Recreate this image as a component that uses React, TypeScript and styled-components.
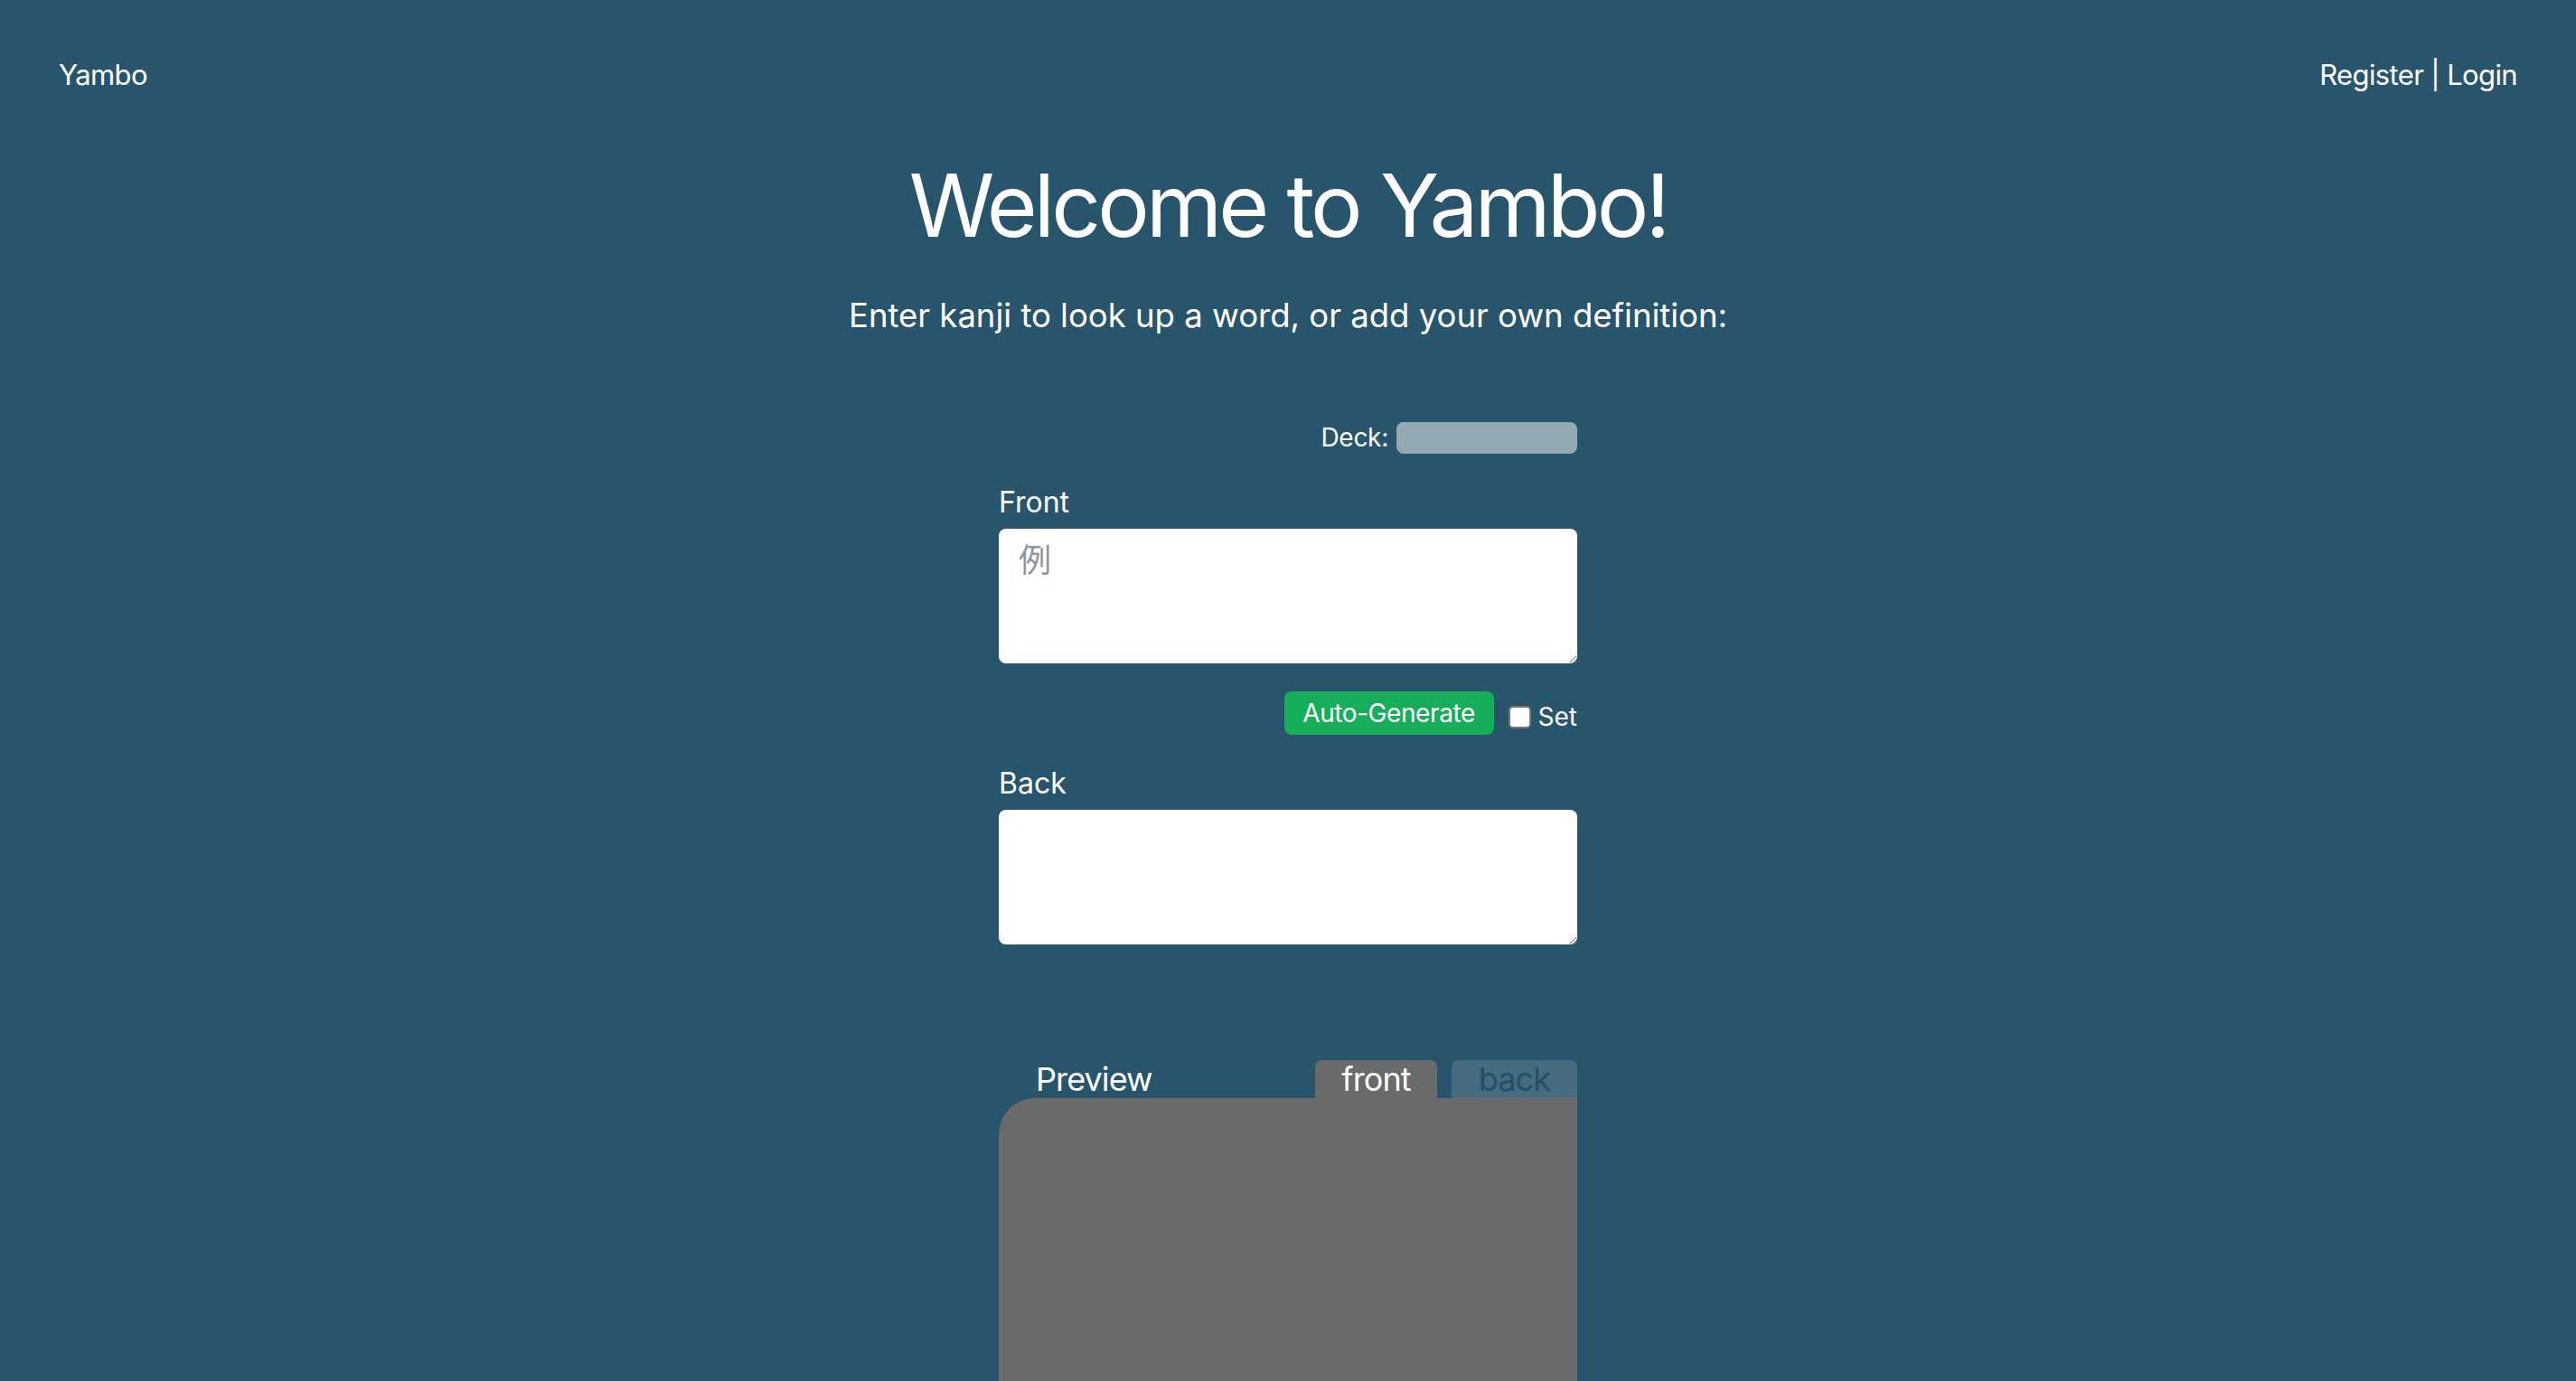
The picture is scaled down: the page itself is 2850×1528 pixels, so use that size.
import React, { useState } from 'react'
import styled, { createGlobalStyle } from 'styled-components'

const GlobalStyle = createGlobalStyle`
  html, body {
    margin: 0;
    padding: 0;
    background: #28556c;
  }
  body {
    font-family: Inter, "Noto Sans", "Noto Sans CJK JP", sans-serif;
    color: #ffffff;
  }
`

const Page = styled.div`
  min-height: 100vh;
  background: #28556c;
  display: flex;
  flex-direction: column;
`

const NavBar = styled.nav`
  display: flex;
  justify-content: space-between;
  align-items: center;
  padding: 63px 65px 0;
  font-size: 31px;
  line-height: 40px;
  letter-spacing: -0.02em;
`

const NavLink = styled.a`
  color: #ffffff;
  text-decoration: none;
  cursor: pointer;
`

const Hero = styled.header`
  display: flex;
  flex-direction: column;
  align-items: center;
`

const Title = styled.h1`
  margin: 69px 0 0;
  font-size: 96px;
  line-height: 110px;
  font-weight: 400;
  letter-spacing: -0.04em;
`

const Subtitle = styled.p`
  margin: 45px 0 0;
  font-size: 36.5px;
  line-height: 44px;
`

const Form = styled.section`
  width: 640px;
  margin: 96px auto 0;
  display: flex;
  flex-direction: column;
`

const DeckRow = styled.div`
  display: flex;
  justify-content: flex-end;
  align-items: center;
  gap: 9px;
  font-size: 28px;
  line-height: 35px;
  letter-spacing: -0.01em;
`

const DeckSelect = styled.div`
  width: 200px;
  height: 35px;
  border-radius: 8px;
  background: #95a9b3;
`

const FieldLabel = styled.label<{ $top: number }>`
  display: block;
  margin-top: ${p => p.$top}px;
  font-size: 32px;
  line-height: 40px;
`

const TextBox = styled.textarea`
  box-sizing: border-box;
  width: 640px;
  height: 149px;
  margin-top: 9px;
  padding: 10px 22px;
  border: none;
  border-radius: 8px;
  background: #ffffff;
  font-family: Inter, "Noto Sans CJK JP", sans-serif;
  font-size: 32px;
  line-height: 44px;
  color: #222;
  outline: none;
  resize: both;

  &::placeholder {
    color: #8d969c;
    font-family: "Noto Sans CJK JP", sans-serif;
    font-size: 36px;
  }
`

const ActionRow = styled.div`
  display: flex;
  justify-content: flex-end;
  align-items: center;
  margin-top: 31px;
  height: 48px;
`

const GenerateButton = styled.button`
  height: 48px;
  width: 232px;
  border: none;
  border-radius: 8px;
  background: #16ae5b;
  color: #ffffff;
  font-family: Inter, sans-serif;
  font-size: 28px;
  letter-spacing: -0.015em;
  cursor: pointer;
`

const CheckLabel = styled.label`
  display: flex;
  align-items: center;
  gap: 8px;
  margin-left: 16px;
  margin-top: 8px;
  font-size: 28px;
  line-height: 32px;
`

const CheckBox = styled.input`
  appearance: none;
  box-sizing: border-box;
  width: 25px;
  height: 25px;
  margin: 0;
  border: 2px solid #767676;
  border-radius: 5px;
  background: #ffffff;
  cursor: pointer;

  &:checked {
    background: #1a73e8;
    border-color: #1a73e8;
  }
`

const PreviewHead = styled.div`
  display: flex;
  align-items: flex-end;
  margin-top: 128px;
  height: 42px;
`

const PreviewTitle = styled.span`
  flex: 1;
  padding-left: 41px;
  font-size: 36px;
  line-height: 42px;
  letter-spacing: -0.025em;
`

const Tab = styled.button<{ $active: boolean }>`
  height: 42px;
  padding: 0 ${p => (p.$active ? 29 : 30)}px;
  margin-left: ${p => (p.$active ? 0 : 16)}px;
  border: none;
  border-radius: 7px 7px 0 0;
  background: ${p => (p.$active ? '#6a6a6a' : '#466a7e')};
  color: ${p => (p.$active ? '#ffffff' : '#22506a')};
  font-family: Inter, sans-serif;
  font-size: 36px;
  line-height: 42px;
  letter-spacing: -0.025em;
  cursor: pointer;
`

const PreviewCard = styled.div`
  height: 520px;
  background: #6a6a6a;
  border-top-left-radius: 40px;
`

export default function App() {
  const [side, setSide] = useState<'front' | 'back'>('front')
  const [front, setFront] = useState('')
  const [back, setBack] = useState('')
  const [setMode, setSetMode] = useState(false)

  return (
    <Page>
      <GlobalStyle />
      <NavBar>
        <NavLink>Yambo</NavLink>
        <NavLink>Register | Login</NavLink>
      </NavBar>
      <Hero>
        <Title>Welcome to Yambo!</Title>
        <Subtitle>Enter kanji to look up a word, or add your own definition:</Subtitle>
      </Hero>
      <Form>
        <DeckRow>
          <span>Deck:</span>
          <DeckSelect />
        </DeckRow>
        <FieldLabel $top={34}>Front</FieldLabel>
        <TextBox placeholder="例" value={front} onChange={e => setFront(e.target.value)} />
        <ActionRow>
          <GenerateButton>Auto-Generate</GenerateButton>
          <CheckLabel>
            <CheckBox
              type="checkbox"
              checked={setMode}
              onChange={e => setSetMode(e.target.checked)}
            />
            Set
          </CheckLabel>
        </ActionRow>
        <FieldLabel $top={34}>Back</FieldLabel>
        <TextBox value={back} onChange={e => setBack(e.target.value)} />
        <PreviewHead>
          <PreviewTitle>Preview</PreviewTitle>
          <Tab $active={side === 'front'} onClick={() => setSide('front')}>
            front
          </Tab>
          <Tab $active={side === 'back'} onClick={() => setSide('back')}>
            back
          </Tab>
        </PreviewHead>
        <PreviewCard />
      </Form>
    </Page>
  )
}
